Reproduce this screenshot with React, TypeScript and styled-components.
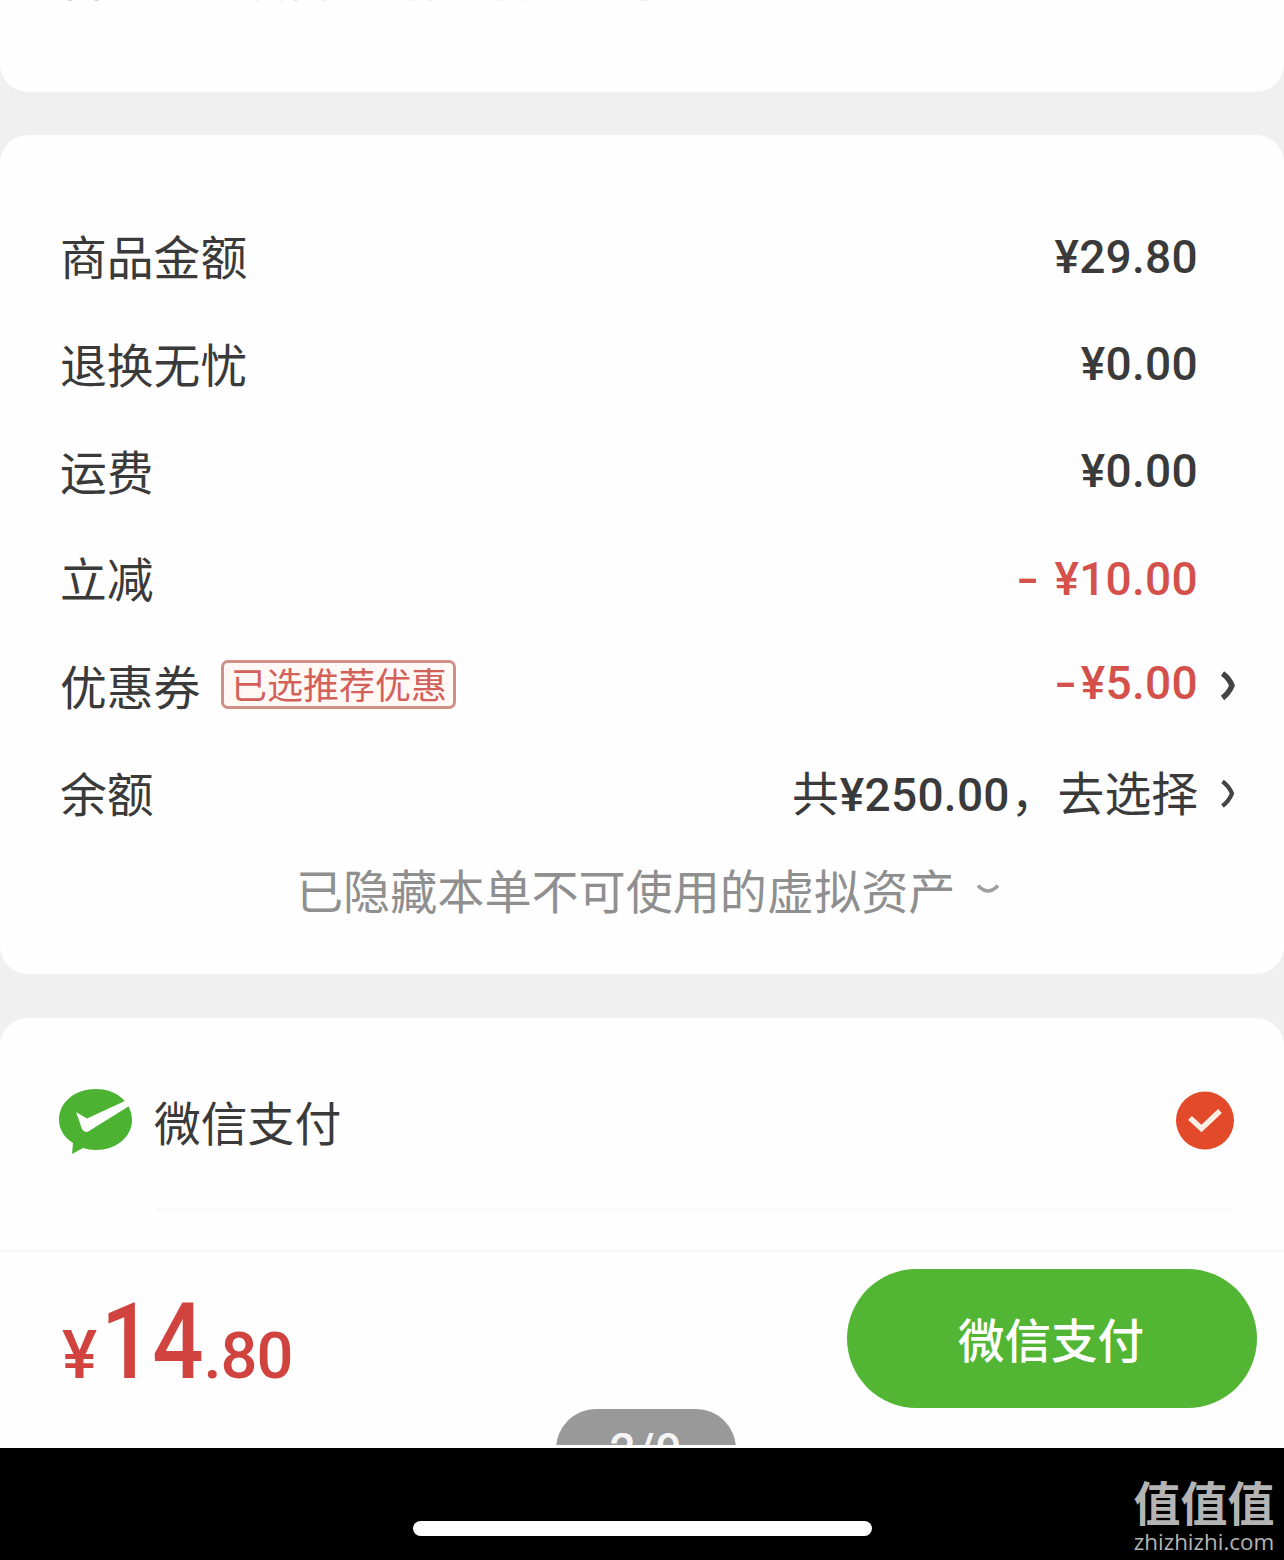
import React from 'react';
import styled, { createGlobalStyle } from 'styled-components';

interface ToneProps {
    $tone?: 'dark' | 'red';
}

interface AmountProps extends ToneProps {
    $shift?: number;
}

const CJK = `'Noto Sans CJK SC', sans-serif`;
const DIGITS = `Roboto, 'Noto Sans CJK SC', sans-serif`;

const GlobalStyle = createGlobalStyle`
    * {
        box-sizing: border-box;
    }
    body {
        margin: 0;
        background: #000;
    }
`;

const S = {
    Screen: styled.div`
    width: 1284px;
    height: 1560px;
    display: flex;
    flex-direction: column;
    overflow: hidden;
    background: #f0f0f0;
    font-family: ${CJK};
    color: #3a3a3a;
  `,
    Invoice: styled.section`
    height: 92px;
    flex: none;
    margin-bottom: 43px;
    padding: 0 60px;
    display: flex;
    align-items: flex-start;
    gap: 40px;
    overflow: hidden;
    background: #fefefe;
    border-radius: 0 0 28px 28px;
    font-size: 46.5px;
    line-height: 60px;
  `,
    InvoiceText: styled.span<{ $faint?: boolean }>`
    margin-top: -54px;
    color: ${({ $faint }) => ($faint ? '#e0e0e0' : '#b4b4b4')};
  `,
    Summary: styled.section`
    height: 839px;
    flex: none;
    margin-bottom: 44px;
    padding: 68px 48px 0 60px;
    background: #fefefe;
    border-radius: 28px;
  `,
    Row: styled.div`
    height: 107.4px;
    display: flex;
    align-items: center;
  `,
    Label: styled.span`
    margin-top: -3px;
    font-size: 46.8px;
    line-height: 60px;
    white-space: nowrap;
  `,
    Tag: styled.span`
    width: 235px;
    height: 49px;
    margin: -4px 0 0 21px;
    padding-bottom: 3px;
    display: flex;
    align-items: center;
    justify-content: center;
    border: 3px solid #cf9088;
    border-radius: 7px;
    background: #fff8f5;
    color: #d4605a;
    font-size: 36px;
    line-height: 40px;
    white-space: nowrap;
  `,
    Amount: styled.span<AmountProps>`
    flex: 1;
    margin-top: ${({ $shift = 0 }) => $shift}px;
    text-align: right;
    white-space: pre;
    font-family: ${DIGITS};
    font-size: 46px;
    font-weight: 500;
    line-height: 60px;
    letter-spacing: 0.3px;
    color: ${({ $tone }) => ($tone === 'red' ? '#d4504a' : '#3a3a3a')};
  `,
    Minus: styled.span`
    display: inline-block;
    margin-right: 4px;
    transform: scaleX(1.4);
    transform-origin: right;
  `,
    Cjk: styled.span`
    margin-right: 1px;
    font-family: ${CJK};
    font-size: 46.8px;
    font-weight: 400;
    letter-spacing: 0;

    &:last-child {
        margin: 0 0 0 1px;
    }
  `,
    Arrow: styled.span`
    width: 38px;
    flex: none;
    display: flex;
    justify-content: flex-end;
  `,
    Hidden: styled.div`
    height: 87px;
    padding: 0 0 4px 236px;
    display: flex;
    align-items: center;
    gap: 21px;
    color: #8f8f8f;
    font-size: 47.1px;
    line-height: 60px;
    white-space: nowrap;
  `,
    Methods: styled.section`
    height: 232px;
    flex: none;
    padding: 0 49px 0 58px;
    background: #fefefe;
    border-radius: 28px 28px 0 0;
  `,
    Method: styled.div`
    height: 193px;
    display: flex;
    align-items: center;
    padding-top: 12px;
  `,
    MethodName: styled.span`
    flex: 1;
    margin-left: 21px;
    font-size: 46.8px;
    line-height: 60px;
  `,
    Divider: styled.div`
    height: 3px;
    margin: -3px 5px 0 97px;
    background: #f9f9f9;
  `,
    PayBar: styled.footer`
    position: relative;
    height: 198px;
    flex: none;
    padding: 17px 27px 0 62px;
    display: flex;
    align-items: flex-start;
    justify-content: space-between;
    overflow: hidden;
    border-top: 2px solid #f5f5f5;
    border-bottom: 3px solid #fefefe;
    background: #fefefe;
  `,
    Total: styled.div`
    display: flex;
    align-items: baseline;
    padding-top: 24px;
    font-family: ${DIGITS};
    font-weight: 500;
    line-height: 100px;
    color: #d0433f;
  `,
    Currency: styled.span`
    font-size: 66px;
  `,
    // large narrow digits for the whole part
    Yuan: styled.span`
    margin: 0 -17px 0 4px;
    font-size: 105px;
    transform: scaleX(0.86);
    transform-origin: left;
  `,
    Cents: styled.span`
    font-size: 65px;
    letter-spacing: -1px;
  `,
    PayButton: styled.button`
    width: 410px;
    height: 139px;
    padding: 0 2px 2px 0;
    border: none;
    border-radius: 70px;
    background: #52b634;
    color: #fff;
    font-family: ${CJK};
    font-size: 46.5px;
    font-weight: 500;
  `,
    // page counter sits over the bottom edge and is cut by it
    Counter: styled.div`
    position: absolute;
    left: 556px;
    bottom: -44px;
    width: 180px;
    height: 80px;
    padding-top: 14px;
    border-radius: 40px;
    background: #999;
    color: #f4f4f4;
    font-family: ${DIGITS};
    font-size: 46px;
    font-weight: 500;
    line-height: 54px;
    letter-spacing: 1px;
    text-align: center;
  `,
    HomeArea: styled.div`
    position: relative;
    flex: 1;
    background: #000;
    display: flex;
    align-items: flex-start;
    justify-content: center;
    padding-top: 73px;
  `,
    HomeIndicator: styled.div`
    width: 459px;
    height: 15px;
    border-radius: 8px;
    background: #fff;
  `,
    Watermark: styled.div`
    position: absolute;
    right: 9px;
    top: 26px;
    width: 142px;
    display: flex;
    flex-direction: column;
    align-items: center;
    color: #b4b4b4;
    white-space: nowrap;
  `,
    WatermarkName: styled.span`
    font-size: 47px;
    font-weight: 700;
    line-height: 54px;
  `,
    WatermarkSite: styled.span`
    margin-top: 2px;
    font-family: 'Open Sans', sans-serif;
    font-size: 22.4px;
    line-height: 24px;
  `
};

const ROWS = [
    { label: '商品金额', value: '¥29.80' },
    { label: '退换无忧', value: '¥0.00' },
    { label: '运费', value: '¥0.00' },
    { label: '立减', minus: '-', value: ' ¥10.00', tone: 'red' as const },
    { label: '优惠券', minus: '-', value: '¥5.00', tone: 'red' as const, tag: '已选推荐优惠', arrow: true, shift: -6 }
];

const Chevron: React.FC<{ bold?: boolean }> = ({ bold }) => (
    <svg width="16" height="30" viewBox="0 0 16 30">
        <path
            d="M2.5 2.5 Q9 7 12 14.5 Q9 22 2.5 27"
            fill="none"
            stroke="#444"
            strokeWidth={bold ? 5.5 : 4.2}
        />
    </svg>
);

const ChevronDown: React.FC = () => (
    <svg width="24" height="12" viewBox="0 0 24 12">
        <path d="M2 2.5 Q7 8 12 8 Q17 8 22 2.5" fill="none" stroke="#a0a0a0" strokeWidth="3.5" />
    </svg>
);

const WeChatPay: React.FC = () => (
    <svg width="75" height="68" viewBox="0 0 75 68">
        <path
            d="M38 2 C58 2 74 15 74 33 C74 50 58 63 38 63 C33 63 29 62 25 61 L14 67 L15 56 C7 51 1 43 1 33 C1 15 17 2 38 2 Z"
            fill="#4cb232"
        />
        <path d="M18 25 L29 31.5 L69 13 L72 18.5 L31 44 Q27 47 24 42 Z" fill="#fff" />
    </svg>
);

const Checked: React.FC = () => (
    <svg width="60" height="60" viewBox="0 0 60 60">
        <circle cx="30" cy="29.5" r="29" fill="#e34a2a" />
        <path d="M15 27 L26.5 37.5 L45 20" fill="none" stroke="#fff0e6" strokeWidth="5.5" />
    </svg>
);

const App: React.FC = () => {
    return (
        <>
            <GlobalStyle />
            <S.Screen>
                <S.Invoice>
                    <S.InvoiceText>备注</S.InvoiceText>
                    <S.InvoiceText $faint>建议留言前先与商家沟通确认</S.InvoiceText>
                </S.Invoice>
                <S.Summary>
                    {ROWS.map(row => (
                        <S.Row key={row.label}>
                            <S.Label>{row.label}</S.Label>
                            {row.tag && <S.Tag>{row.tag}</S.Tag>}
                            <S.Amount $tone={row.tone} $shift={row.shift}>
                                {row.minus && <S.Minus>{row.minus}</S.Minus>}
                                {row.value}
                            </S.Amount>
                            <S.Arrow>{row.arrow && <Chevron bold />}</S.Arrow>
                        </S.Row>
                    ))}
                    <S.Row>
                        <S.Label>余额</S.Label>
                        <S.Amount $shift={-1}>
                            <S.Cjk>共</S.Cjk>¥250.00<S.Cjk>，去选择</S.Cjk>
                        </S.Amount>
                        <S.Arrow>
                            <Chevron />
                        </S.Arrow>
                    </S.Row>
                    <S.Hidden>
                        已隐藏本单不可使用的虚拟资产
                        <ChevronDown />
                    </S.Hidden>
                </S.Summary>
                <S.Methods>
                    <S.Method>
                        <WeChatPay />
                        <S.MethodName>微信支付</S.MethodName>
                        <Checked />
                    </S.Method>
                    <S.Divider />
                </S.Methods>
                <S.PayBar>
                    <S.Total>
                        <S.Currency>¥</S.Currency>
                        <S.Yuan>14</S.Yuan>
                        <S.Cents>.80</S.Cents>
                    </S.Total>
                    <S.PayButton>微信支付</S.PayButton>
                    <S.Counter>2/9</S.Counter>
                </S.PayBar>
                <S.HomeArea>
                    <S.HomeIndicator />
                    <S.Watermark>
                        <S.WatermarkName>值值值</S.WatermarkName>
                        <S.WatermarkSite>zhizhizhi.com</S.WatermarkSite>
                    </S.Watermark>
                </S.HomeArea>
            </S.Screen>
        </>
    );
};

export default App;
